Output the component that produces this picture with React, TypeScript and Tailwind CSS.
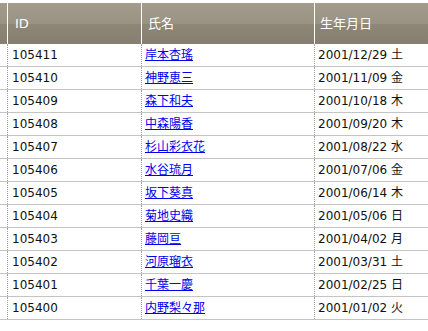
import React from 'react';

type Row = {
  id: string;
  name: string;
  birth: string;
};

const rows: Row[] = [
  { id: '105411', name: '岸本杏瑤', birth: '2001/12/29 土' },
  { id: '105410', name: '神野恵三', birth: '2001/11/09 金' },
  { id: '105409', name: '森下和夫', birth: '2001/10/18 木' },
  { id: '105408', name: '中森陽香', birth: '2001/09/20 木' },
  { id: '105407', name: '杉山彩衣花', birth: '2001/08/22 水' },
  { id: '105406', name: '水谷琉月', birth: '2001/07/06 金' },
  { id: '105405', name: '坂下葵真', birth: '2001/06/14 木' },
  { id: '105404', name: '菊地史織', birth: '2001/05/06 日' },
  { id: '105403', name: '藤岡亘', birth: '2001/04/02 月' },
  { id: '105402', name: '河原瑠衣', birth: '2001/03/31 土' },
  { id: '105401', name: '千葉一慶', birth: '2001/02/25 日' },
  { id: '105400', name: '内野梨々那', birth: '2001/01/02 火' }
];

const font = { fontFamily: '"DejaVu Sans", "Noto Sans CJK JP", sans-serif' };

export default function App() {
  return (
    <div className="w-[428px] h-[331px] overflow-hidden bg-white pt-[3px]" style={font}>
      <div className="w-[520px]">
        {/* header */}
        <div className="flex h-[41px] text-white text-[13px] bg-[linear-gradient(to_bottom,#a39c8d_0%,#9a9282_50%,#8e8676_52%,#867e6e_100%)]">
          <div className="w-[8px] border-r border-white" />
          <div className="w-[134px] border-r border-white flex items-center pl-[7px]">ID</div>
          <div className="w-[173px] border-r border-white flex items-center pl-[6px]">氏名</div>
          <div className="flex-1 flex items-center pl-[5px]">生年月日</div>
        </div>
        {/* body */}
        {rows.map((r) => (
          <div key={r.id} className="flex h-[23px] border-b border-[#c4c4c4] text-[12px] text-[#111]">
            <div className="w-[8px] border-r border-dotted border-[#a0a0a0]" />
            <div className="w-[134px] border-r border-dotted border-[#a0a0a0] flex items-center pl-[4px]">{r.id}</div>
            <div className="w-[173px] border-r border-dotted border-[#a0a0a0] flex items-center pl-[3px]">
              <a href="#" className="text-[#0000ee] underline">{r.name}</a>
            </div>
            <div className="flex-1 flex items-center pl-[3px]">{r.birth}</div>
          </div>
        ))}
      </div>
    </div>
  );
}
